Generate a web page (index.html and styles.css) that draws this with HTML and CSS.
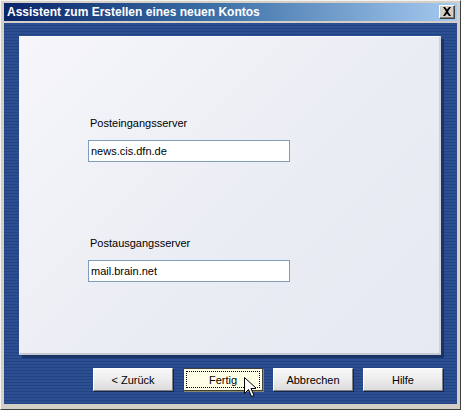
FILE: index.html
```html
<!DOCTYPE html>
<html>
<head>
<meta charset="utf-8">
<link rel="stylesheet" href="styles.css">
</head>
<body>
<div class="window">
  <div class="titlebar">
    <span class="title">Assistent zum Erstellen eines neuen Kontos</span>
    <span class="close"><svg width="10" height="9" viewBox="0 0 10 9"><path d="M1 0h2l2 2.5L7 0h2L6 4.5 9 9H7L5 6.5 3 9H1l3-4.5z" fill="#000"/></svg></span>
  </div>
  <div class="client">
    <div class="panel">
      <div class="field first">
        <div class="label">Posteingangsserver</div>
        <div class="input">news.cis.dfn.de</div>
      </div>
      <div class="field second">
        <div class="label">Postausgangsserver</div>
        <div class="input">mail.brain.net</div>
      </div>
    </div>
    <div class="buttons">
      <div class="btn">&lt; Zurück</div>
      <div class="btn default"><span class="focus">Fertig</span></div>
      <div class="btn">Abbrechen</div>
      <div class="btn">Hilfe</div>
      <svg class="cursor" width="12" height="20" viewBox="0 0 12 20"><path d="M0.5 0.5v16l4-4 3 7 2.5-1-3-7h5.5z" fill="#fff" stroke="#000" stroke-width="1"/></svg>
    </div>
  </div>
</div>
</body>
</html>
```
FILE: styles.css
```css
* { box-sizing: border-box; }
html, body { margin: 0; padding: 0; }
body {
  width: 461px; height: 410px; overflow: hidden;
  font-family: "Liberation Sans", Arial, sans-serif;
  font-size: 11px;
}
.window {
  width: 461px; height: 410px;
  background: #d4d0c8;
  border-top: 1px solid #f4f3ef;
  border-left: 1px solid #f4f3ef;
  border-right: 1px solid #404040;
  border-bottom: 1px solid #404040;
  padding: 2px 3px 5px 3px;
  display: flex; flex-direction: column;
}
.titlebar {
  height: 18px;
  background: linear-gradient(to right, #0a246a 0%, #3a6ea5 45%, #a6caf0 100%);
  display: flex; align-items: center; justify-content: space-between;
  padding: 0 2px 0 3px;
}
.title {
  color: #fff; font-weight: bold; font-size: 12px;
  font-family: "Liberation Sans", Arial, sans-serif;
  white-space: nowrap;
}
.close {
  width: 16px; height: 14px;
  background: #d4d0c8;
  border-top: 1px solid #fff; border-left: 1px solid #fff;
  border-right: 1px solid #404040; border-bottom: 1px solid #404040;
  box-shadow: inset -1px -1px 0 #808080;
  display: flex; align-items: center; justify-content: center;
  padding-bottom: 1px;
}
.client {
  margin-top: 2px;
  flex: 1;
  background: repeating-linear-gradient(to bottom, #2c4f93 0px, #2c4f93 2px, #22437f 2px, #22437f 3px);
  padding: 13px 16px 0 15px;
  display: flex; flex-direction: column;
}
.panel {
  height: 319px;
  background: linear-gradient(135deg, #f6f6fa 0%, #e9ecf3 60%, #e6e9f1 100%);
  border-top: 1px solid #f8f8fb;
  border-left: 1px solid #f0f0f5;
  border-right: 2px solid #cfd2d9;
  border-bottom: 2px solid #c6c9d1;
  box-shadow: 3px 3px 0 #1a3366;
  padding-left: 68px;
  padding-top: 80px;
}
.field { display: flex; flex-direction: column; }
.second { margin-top: 75px; }
.label { color: #000; padding-left: 2px; height: 13px; line-height: 13px; }
.input {
  margin-top: 10px;
  width: 202px; height: 22px;
  background: #fff;
  border: 1px solid #7f9db9;
  padding-left: 2px;
  line-height: 20px;
  color: #000;
}
.buttons {
  position: relative;
  display: flex; gap: 10px;
  justify-content: flex-end;
  margin-top: 13px;
  margin-right: -2px;
}
.btn {
  width: 80px; height: 23px;
  background: linear-gradient(to bottom, #f8f8f8 0%, #ececec 50%, #dcdcdc 100%);
  border-top: 1px solid #ffffff;
  border-left: 1px solid #ffffff;
  border-right: 1px solid #808080;
  border-bottom: 1px solid #808080;
  box-shadow: 1px 1px 0 #102650;
  display: flex; align-items: center; justify-content: center;
  color: #000;
}
.btn.default {
  background: #ffffe6;
  border: 1px solid #404040;
  box-shadow: 1px 1px 0 #8a8a60;
  padding: 2px;
}
.focus {
  flex: 1; align-self: stretch;
  border: 1px dotted #000;
  display: flex; align-items: center; justify-content: center;
}
.cursor {
  position: absolute;
  left: 225px; top: 9px;
}
```
